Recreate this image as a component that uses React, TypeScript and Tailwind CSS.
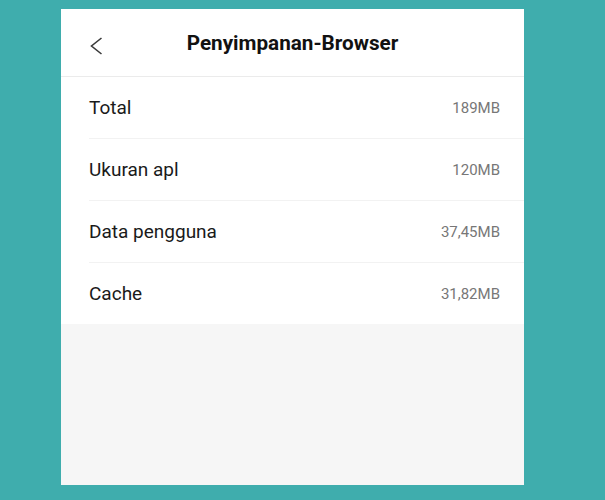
export default function App() {
  const rows = [
    { label: "Total", value: "189MB" },
    { label: "Ukuran apl", value: "120MB" },
    { label: "Data pengguna", value: "37,45MB" },
    { label: "Cache", value: "31,82MB" },
  ];

  return (
    <div className="h-[500px] w-[605px] bg-[#3fadad] pt-[9px] pl-[61px] font-['Roboto',sans-serif]">
      <div className="flex h-[476px] w-[463px] flex-col bg-[#f6f6f6]">
        {/* header */}
        <div className="relative flex h-[68px] items-center justify-center border-b border-[#ebebeb] bg-white pt-[2px]">
          <svg
            className="absolute left-[29px] top-[28px]"
            width="13"
            height="18"
            viewBox="0 0 13 18"
            fill="none"
          >
            <path d="M11.5 1 L1.5 9 L11.5 17" stroke="#3a3a3a" strokeWidth="1.6" />
          </svg>
          <h1 className="text-[20.7px] font-bold text-[#111]">Penyimpanan-Browser</h1>
        </div>

        {/* rows */}
        <div className="bg-white pl-[28px]">
          {rows.map((r, i) => (
            <div
              key={r.label}
              className={
                i < rows.length - 1
                  ? "flex h-[62px] items-center justify-between border-b border-[#f2f2f2] pr-[24px] pt-[2px]"
                  : "flex h-[61px] items-center justify-between pr-[24px] pt-[2px]"
              }
            >
              <span className="text-[19px] text-[#1a1a1a]">{r.label}</span>
              <span className="text-[15px] text-[#777]">{r.value}</span>
            </div>
          ))}
        </div>
      </div>
    </div>
  );
}
